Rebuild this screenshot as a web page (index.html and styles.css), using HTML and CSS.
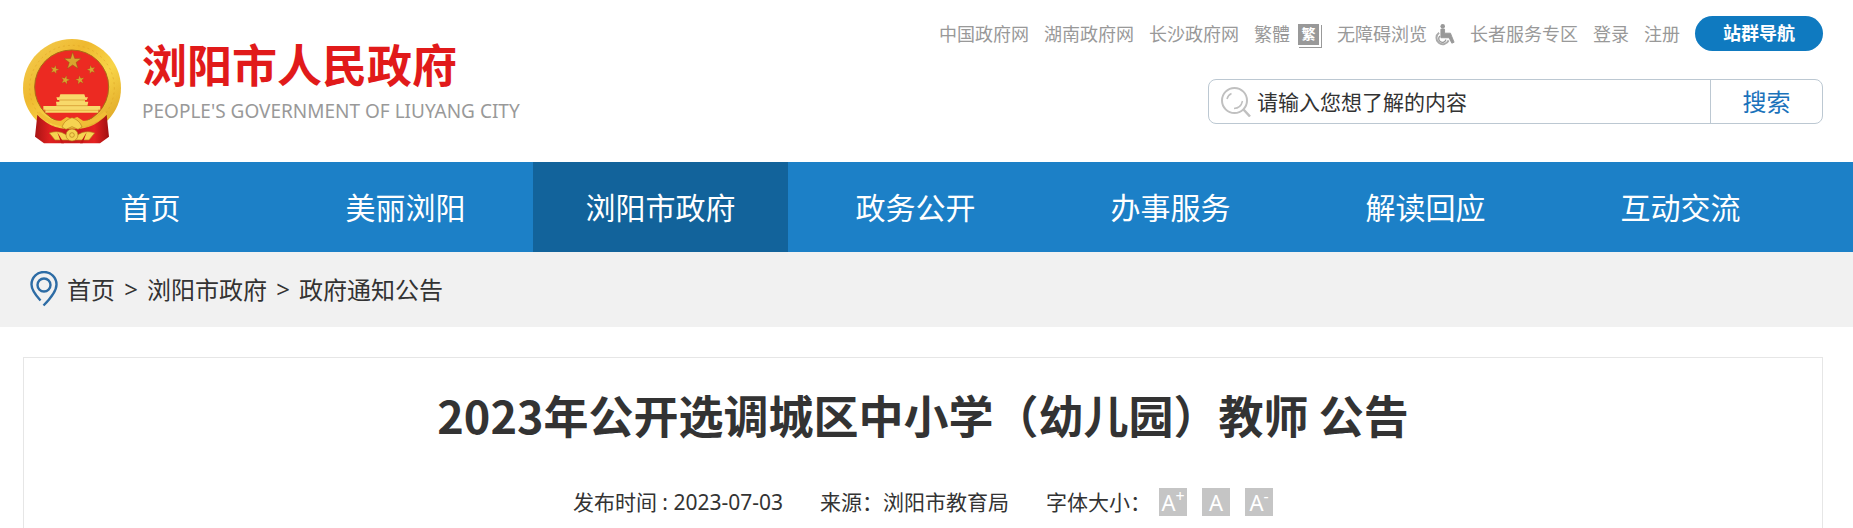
FILE: index.html
```html
<!DOCTYPE html>
<html lang="zh-CN">
<head>
<meta charset="utf-8">
<meta name="viewport" content="width=device-width, initial-scale=1">
<title>浏阳市人民政府</title>
<link rel="stylesheet" href="styles.css">
</head>
<body>
<header class="header wrap">
  <a class="brand" href="#">
    <svg class="emblem" viewBox="69 57 294 315" aria-hidden="true">
      <defs>
        <linearGradient id="gold" x1="0" y1="0" x2="1" y2="1">
          <stop offset="0" stop-color="#f3cf55"/><stop offset=".35" stop-color="#efb92f"/>
          <stop offset=".6" stop-color="#f8d548"/><stop offset="1" stop-color="#d99a1c"/>
        </linearGradient>
        <linearGradient id="drape" x1="0" x2="1">
          <stop offset="0" stop-color="#a81414"/><stop offset=".2" stop-color="#e02020"/>
          <stop offset=".5" stop-color="#c41818"/><stop offset=".8" stop-color="#e52222"/><stop offset="1" stop-color="#a01010"/>
        </linearGradient>
        <path id="star" d="M0-10 2.3-3.2 9.5-3.1 3.8 1.2 5.9 8.1 0 4-5.9 8.1-3.8 1.2-9.5-3.1-2.3-3.2Z"/>
      </defs>
      <path d="M216 57C135 57 69 123 69 204C69 241 82 272 108 300L160 338H272L324 300C350 272 363 241 363 204C363 123 297 57 216 57Z" fill="url(#gold)"/>
      <circle cx="216" cy="203" r="127" fill="none" stroke="#d79a20" stroke-width="3" stroke-dasharray="6 9" opacity=".45"/>
      <circle cx="215" cy="201" r="111" fill="#ec2a22" stroke="#a96b16" stroke-width="3"/>
      <path d="M112 284C132 306 158 322 190 326H242C274 322 300 306 320 284L327 350L300 370H132L105 350Z" fill="url(#drape)"/>
      <path d="M111 282C135 306 158 314 182 318C196 322 205 310 216 310C227 310 238 322 250 318C276 314 300 304 321 282L314 274C294 292 272 304 249 302L232 291L216 296L200 291L183 302C158 304 138 292 118 274Z" fill="#f1bd36"/>
      <g fill="#d8a52e" stroke="#8c5a12" stroke-width=".5">
        <use href="#star" transform="translate(218 124) scale(2.7)"/>
        <use href="#star" transform="translate(164 149) rotate(15) scale(1.35)"/>
        <use href="#star" transform="translate(274 149) rotate(-15) scale(1.35)"/>
        <use href="#star" transform="translate(196 180) rotate(15) scale(1.4)"/>
        <use href="#star" transform="translate(240 180) rotate(-10) scale(1.4)"/>
      </g>
      <path d="M181 223H253L256 232H264L260 240H255V245H265L262 258H301V269H295V278H136V269H130V258H170L168 245H178V240H172L169 232H178Z" fill="#f8d96a"/>
      <path d="M178 240H256M170 257H264" stroke="#cf8e26" stroke-width="2"/>
      <path d="M132 271H299" stroke="#dfa432" stroke-width="2"/>
      <g fill="#f6d351" stroke="#b77b1b" stroke-width="2">
        <path d="M148 339C167 332 186 335 199 345L207 360H165Z"/>
        <path d="M284 339C265 332 246 335 233 345L225 360H267Z"/>
        <path d="M186 321C192 306 200 299 216 293C232 299 240 306 246 321L234 328L216 320L198 328Z"/>
        <circle cx="216" cy="345" r="18"/>
        <circle cx="216" cy="345" r="7"/>
      </g>
      <path d="M172 337L192 370H240L260 337L248 370H184Z" fill="#c51515"/>
    </svg>
    <span class="brand-text">
      <span class="brand-name">浏阳市人民政府</span>
      <span class="brand-sub">PEOPLE'S GOVERNMENT OF LIUYANG CITY</span>
    </span>
  </a>
  <div class="tools">
    <nav class="links" aria-label="快捷链接">
      <a class="link" href="#">中国政府网</a>
      <a class="link" href="#">湖南政府网</a>
      <a class="link" href="#">长沙政府网</a>
      <a class="link with-icon" href="#">繁體
        <span class="trad" aria-hidden="true">繁</span>
      </a>
      <a class="link with-icon" href="#">无障碍浏览
        <svg class="chair" viewBox="0 0 22 24" aria-hidden="true" fill="none" stroke="#999">
          <circle cx="8.500" cy="2.500" r="2.500" fill="#999" stroke="none"/>
          <path d="M6.500 5.500H10.500V10H17L21 20L18.500 21L15.500 15H6.500Z" fill="#999" stroke="#999"/>
          <path d="M4.500 9.500A7 7 0 1 0 15 18" stroke-width="2.200" stroke="#aaa"/>
          <path d="M5.500 13A4 4 0 1 0 12 17" stroke-width="1.500"/>
        </svg>
      </a>
      <a class="link" href="#">长者服务专区</a>
      <a class="link" href="#">登录</a>
      <a class="link" href="#">注册</a>
      <a class="sites" href="#">站群导航</a>
    </nav>
    <form class="search" role="search">
      <label class="search-label" for="q" aria-label="搜索内容">
        <svg class="lens" viewBox="0 0 30 30" fill="none" stroke="#c0c0c0">
          <circle cx="13.500" cy="13.500" r="12.500" stroke-width="2"/>
          <path d="M22.500 22.500L29 29.500" stroke-width="2.500"/>
          <path d="M6 12Q7 8 10.500 6.500M13 21.500Q20 21 21.500 14" stroke-width="1.500"/>
        </svg>
      </label>
      <input class="search-input" id="q" type="text" placeholder="请输入您想了解的内容">
      <button class="search-button" type="button">搜索</button>
    </form>
  </div>
</header>
<nav class="nav" aria-label="主导航">
  <a href="#">首页</a>
  <a href="#">美丽浏阳</a>
  <a class="active" href="#">浏阳市政府</a>
  <a href="#">政务公开</a>
  <a href="#">办事服务</a>
  <a href="#">解读回应</a>
  <a href="#">互动交流</a>
</nav>
<nav class="crumbs" aria-label="当前位置">
  <svg class="pin" viewBox="0 0 28 36" fill="none" stroke="#2d6ca5" aria-hidden="true">
    <path d="M10.500 29.500C5 23.500 1.500 19 1.500 13.500A12.500 12.500 0 0 1 26.500 13.500C26.500 20 20.500 27.500 13.500 34.500" stroke-width="2.400"/>
    <circle cx="14" cy="14" r="6.500" stroke-width="2.400"/>
  </svg>
  <a href="#">首页</a><span class="sep">&gt;</span><a href="#">浏阳市政府</a><span class="sep">&gt;</span><a href="#">政府通知公告</a>
</nav>
<main class="article">
  <h1 class="title">2023年公开选调城区中小学（幼儿园）教师 公告</h1>
  <div class="meta">
    <span>发布时间 : 2023-07-03</span>
    <span>来源：浏阳市教育局</span>
    <div class="sizes">
      <span>字体大小：</span>
      <div class="size-buttons">
        <button class="size" type="button" aria-label="放大字体">A<sup>+</sup></button>
        <button class="size" type="button" aria-label="默认字体">A</button>
        <button class="size" type="button" aria-label="缩小字体">A<sup>-</sup></button>
      </div>
    </div>
  </div>
</main>
</body>
</html>
```
FILE: styles.css
```css
* { box-sizing: border-box; }
body {
  margin: 0;
  background: #fff;
  color: #333;
  font-family: "Noto Sans", "Noto Sans CJK SC", sans-serif;
  overflow-x: hidden;
}
a { color: inherit; text-decoration: none; }
button, input { font: inherit; color: inherit; margin: 0; }
svg { display: block; flex: none; }

.header {
  display: flex;
  justify-content: space-between;
  align-items: flex-start;
  min-height: 162px;
  padding: 15px 30px 15px 23px;
}
.brand { display: flex; gap: 21px; padding-top: 24px; }
.emblem { width: 98px; height: 105px; }
.brand-text { display: flex; flex-direction: column; }
.brand-name {
  color: #e11a1a;
  font-size: 45px;
  font-weight: 700;
  line-height: 54px;
}
.brand-sub { color: #999; font-size: 19px; line-height: 36px; }

.tools { display: flex; flex-direction: column; align-items: flex-end; gap: 27px; }
.links {
  display: flex;
  align-items: center;
  gap: 15px;
  color: #999;
  font-size: 18px;
  line-height: 35px;
  white-space: nowrap;
}
.link { padding-top: 2px; }
.with-icon { display: flex; align-items: center; gap: 8px; }
.trad {
  width: 21px;
  height: 21px;
  margin-right: 3px;
  background: #999;
  color: #fff;
  box-shadow: 1px 1px 0 1px #fff, 2px 2px 0 1px #999;
  font-size: 14px;
  font-weight: 700;
  line-height: 20px;
  text-align: center;
}
.chair { width: 20px; height: 24px; }
.sites {
  width: 128px;
  border-radius: 18px;
  background: #0f7ac0;
  color: #fff;
  font-weight: 700;
  text-align: center;
}
.search {
  display: flex;
  align-items: center;
  width: 615px;
  height: 45px;
  border: 1px solid #bcc8d2;
  border-radius: 8px;
}
.search-label { padding: 0 6px 0 12px; }
.lens { width: 30px; height: 30px; }
.search-input {
  flex: 1;
  min-width: 0;
  padding: 0;
  border: 0;
  outline: 0;
  background: none;
  font-size: 21px;
}
.search-input::placeholder { color: #333; opacity: 1; }
.search-button {
  width: 112px;
  height: 43px;
  padding: 0;
  border: 0;
  border-left: 1px solid #bcc8d2;
  background: none;
  color: #1a72bb;
  font-size: 24px;
  line-height: 40px;
}

.nav {
  display: grid;
  grid-template-columns: repeat(7, 1fr);
  padding: 0 45px 0 23px;
  background: #1c80c7;
  color: #fff;
  font-size: 30px;
  line-height: 88px;
  text-align: center;
}
.nav a { padding-top: 2px; }
.nav .active { background: #12639b; }

.crumbs {
  display: flex;
  align-items: center;
  height: 75px;
  padding: 0 30px 2px;
  background: #f1f1f1;
  font-size: 24px;
}
.pin { width: 28px; height: 36px; margin-right: 9px; }
.sep { width: 32px; text-align: center; }

.article {
  margin: 30px 30px 0 23px;
  padding: 24px 20px;
  border: 1px solid #e6e6e6;
}
.title {
  margin: 0;
  font-family: "Noto Sans CJK SC", sans-serif;
  font-size: 45px;
  font-weight: 700;
  line-height: 66px;
  text-align: center;
}
.meta {
  display: flex;
  justify-content: center;
  gap: 37px;
  margin-top: 34px;
  font-size: 21px;
  line-height: 40px;
}
.sizes { display: flex; align-items: center; gap: 8px; }
.size-buttons { display: flex; gap: 15px; }
.size {
  display: flex;
  justify-content: center;
  width: 28px;
  height: 28px;
  padding: 0;
  border: 0;
  background: #c5c5c5;
  color: #fff;
  font-size: 22px;
  line-height: 28px;
}
.size sup { font-size: 16px; line-height: 16px; }
```
